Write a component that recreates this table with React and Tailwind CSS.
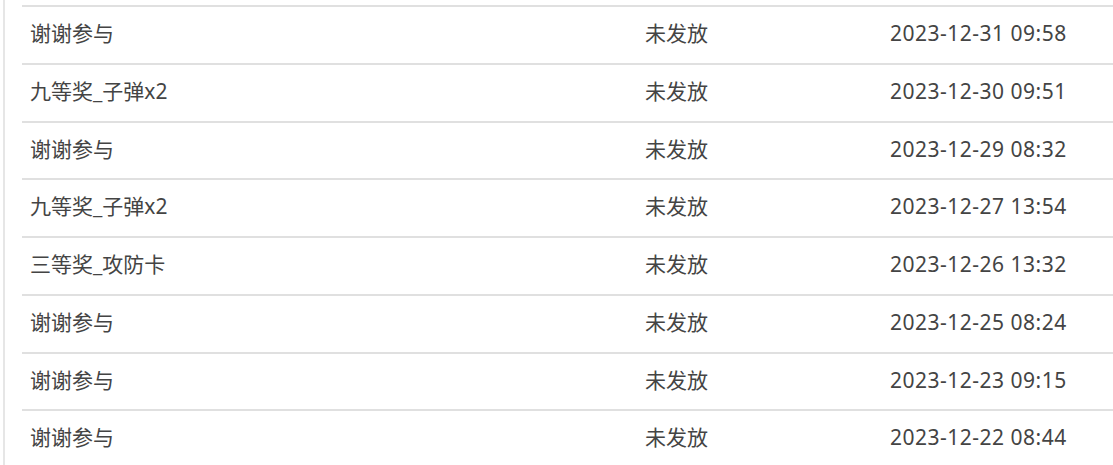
const ROWS = [
  { name: '谢谢参与', status: '未发放', time: '2023-12-31 09:58' },
  { name: '九等奖_子弹x2', status: '未发放', time: '2023-12-30 09:51' },
  { name: '谢谢参与', status: '未发放', time: '2023-12-29 08:32' },
  { name: '九等奖_子弹x2', status: '未发放', time: '2023-12-27 13:54' },
  { name: '三等奖_攻防卡', status: '未发放', time: '2023-12-26 13:32' },
  { name: '谢谢参与', status: '未发放', time: '2023-12-25 08:24' },
  { name: '谢谢参与', status: '未发放', time: '2023-12-23 09:15' },
  { name: '谢谢参与', status: '未发放', time: '2023-12-22 08:44' },
];

export default function App() {
  return (
    <div
      className="w-[1113px] h-[465px] bg-white overflow-hidden pl-[3px]"
      style={{ fontFamily: '"Segoe UI", "Noto Sans", "Noto Sans CJK SC", sans-serif' }}
    >
      <div className="h-full border-l-2 border-[#e6e6e6] pl-[17px] pt-[5px]">
        {ROWS.map((r, i) => (
          <div
            key={i}
            className="h-[57.75px] border-t-2 border-[#e0e0e0] grid grid-cols-[615px_245px_1fr] items-center pl-[8px] pb-[2px] text-[21px] text-[#444]"
          >
            <span>{r.name}</span>
            <span>{r.status}</span>
            <span className="tracking-[0.5px]">{r.time}</span>
          </div>
        ))}
      </div>
    </div>
  );
}
